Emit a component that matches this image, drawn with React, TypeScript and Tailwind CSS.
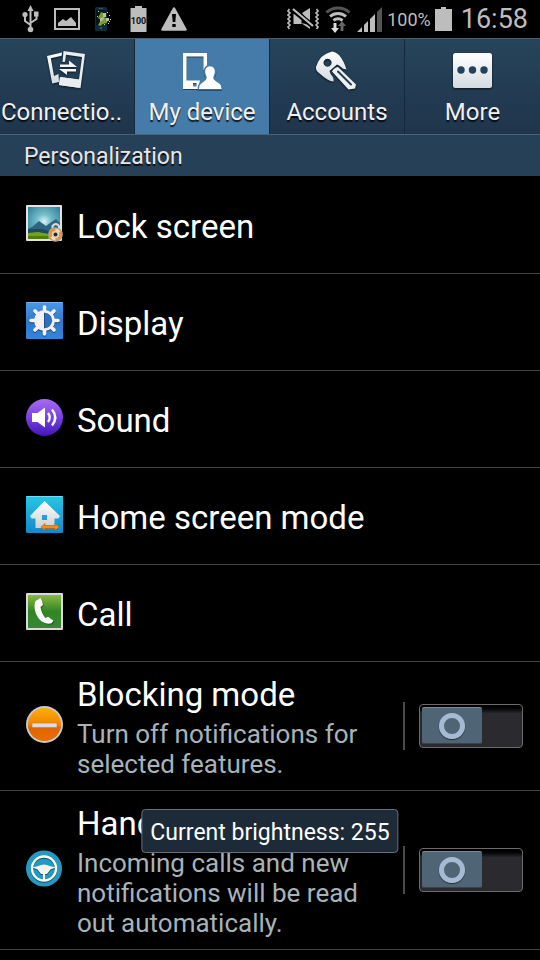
import type { ReactNode } from "react";

function UsbIcon() {
  return (
    <svg width="18" height="28" viewBox="0 0 18 28" fill="none" stroke="#bdbdbd" strokeWidth="2">
      <path d="M8.500 4v20M8.500 20l-5.500-4v-4M8.500 18l6-4v-3" />
      <path d="M8.500 0l3 6h-6z" fill="#bdbdbd" stroke="none" />
      <circle cx="8.500" cy="24.500" r="2.800" fill="#bdbdbd" stroke="none" />
      <circle cx="3" cy="9.500" r="2.600" fill="#bdbdbd" stroke="none" />
      <path d="M12 6.500h4.500v5H12z" fill="#bdbdbd" stroke="none" />
    </svg>
  );
}

function PictureIcon() {
  return (
    <svg width="26" height="22" viewBox="0 0 26 22">
      <path d="M1 1h24v20H1z" fill="none" stroke="#bdbdbd" strokeWidth="2" />
      <path d="M4 18v-3l5-4 3 2 5-4 5 6v3z" fill="#bdbdbd" />
    </svg>
  );
}

function PhoneSparkIcon() {
  return (
    <svg width="18" height="24" viewBox="0 0 18 24">
      <rect width="12" height="24" rx="1.500" fill="#0d2b38" />
      <path d="M1 3h10v15H1z" fill="#06161f" />
      <path d="M4 1h4v1H4zM5 20h2v2H5z" fill="#32566a" />
      <path d="M6 5l5 2-2 3 4 2-1 4-4 1-3 2-2-1 3-5-3-2z" fill="#7d9a35" />
      <path d="M8 6h3v4H8zM11 11h3v3h-3zM5 12l3-2 1 2-4 3z" fill="#b9c39a" />
      <path d="M3 4h1v1H3zM12 5h1v1h-1zM14 8h1v1h-1zM13 16h1v1h-1zM15 12h1v1h-1zM2 9h1v1H2zM9 17h1v1H9zM14 14h1v1h-1z" fill="#d8d86a" />
    </svg>
  );
}

function BatteryLevelIcon() {
  return (
    <svg width="17" height="26" viewBox="0 0 17 26">
      <path d="M5 0h7v2h4.500v24H.5V2H5z" fill="#bdbdbd" />
      <text x="8.500" y="18" textAnchor="middle" className="font-['Roboto',sans-serif] text-[9px] font-bold" fill="#111">100</text>
    </svg>
  );
}

function WarningIcon() {
  return (
    <svg width="26" height="24" viewBox="0 0 26 24">
      <path d="M13 1.500L24.500 22.500H1.500z" fill="#bdbdbd" stroke="#bdbdbd" strokeWidth="2.500" strokeLinejoin="round" />
      <path d="M11 7h4l-.7 8h-2.600zM11.300 17h3.400v3h-3.400z" fill="#000" />
    </svg>
  );
}

function MuteIcon() {
  return (
    <svg width="32" height="22" viewBox="0 0 32 22">
      <path d="M2.500 1l-1.500 2 2 2-2 2 2 2-2 2 2 2-2 2 2 2-2 2 1.500 2M29.500 1l1.500 2-2 2 2 2-2 2 2 2-2 2 2 2-2 2 2 2-1.500 2" fill="none" stroke="#bdbdbd" strokeWidth="1.600" />
      <path d="M6.500 6h4l4 3v7h-8zM15 5l8-5v15z" fill="#bdbdbd" />
      <path d="M14 15l9 2v4z" fill="#bdbdbd" />
      <path d="M5 1l22 18" stroke="#000" strokeWidth="5" />
      <path d="M6 1l20 17" stroke="#bdbdbd" strokeWidth="2.200" />
    </svg>
  );
}

function WifiIcon() {
  return (
    <svg width="26" height="27" viewBox="0 0 26 27" fill="none" stroke="#bdbdbd" strokeWidth="3">
      <path d="M1.500 6.500a17 17 0 0 1 23 0" stroke="#555" />
      <path d="M5 10.500a12 12 0 0 1 16 0M8.500 14.500a7 7 0 0 1 9 0" />
      <path d="M8.500 17h3v5H14l-4 5-4-5h2.500z" fill="#dedede" stroke="none" />
      <path d="M15.500 25v-5H13l4-5 4 5h-2.500v5z" fill="#666" stroke="none" />
    </svg>
  );
}

function SignalIcon() {
  return (
    <svg width="26" height="25" viewBox="0 0 26 25" fill="#bdbdbd">
      <path d="M0 25l5-5v5zM7 25v-7l4-4v11zM13 25V12l5-5v18z" />
      <path d="M20 25V5l5-5v25z" fill="#555" />
    </svg>
  );
}

function ConnectionsIcon() {
  return (
    <svg width="40" height="40" viewBox="0 0 40 40" className="drop-shadow-[0_1px_1px_#0009]">
      <defs>
        <linearGradient id="silver" x1="0" y1="0" x2="0" y2="1">
          <stop offset="0" stopColor="#fff" />
          <stop offset="1" stopColor="#d3dbe2" />
        </linearGradient>
      </defs>
      <path d="M0 6L15 2.500l-.4 3.200L3.800 8.300 7 26l4.500-2 .5 8-6.800 1.500z" fill="url(#silver)" />
      <path fillRule="evenodd" d="M16.500 1L38 4l-4.500 34L12 35l1-8 19 2.500 3-22.600-16-2.200-1 7-2.500.4z" fill="#e9edf0" />
      <path fillRule="evenodd" d="M13 27l20 2.700-1.100 8L12 35zM21 30.800l-.5 3.600 3.500.5.500-3.600z" fill="#e9edf0" />
      <path d="M13 14.500h9V10.500l8 6.500H13zM29 19H12l8 6v-3.500h9z" fill="#f4f6f7" />
    </svg>
  );
}

function DeviceIcon() {
  return (
    <svg width="40" height="40" viewBox="0 0 40 40" className="drop-shadow-[0_1px_0_#0007]">
      <path fillRule="evenodd" d="M1 3h24v15l-3.500 2V6.500h-17v24H18l-2 8.500H1zM11 33v3.500h3.500V33z" fill="#fff" />
      <path d="M28 15.500c4 0 6 3 5.500 7-.3 2.500-1.500 4-1.500 5.500 0 3 8 4 8 9V39H16.500v-2c0-5 7.500-6 7.500-9 0-1.500-1.200-3-1.500-5.500-.5-4 1.500-7 5.500-7z" fill="#fff" stroke="#447ba8" strokeWidth="1.500" />
      <path d="M17 38.500h22.500" stroke="#fff" />
    </svg>
  );
}

function KeyIcon() {
  return (
    <svg width="42" height="40" viewBox="0 0 42 40" className="drop-shadow-[0_1px_1px_#000a]">
      <path fillRule="evenodd" d="M0 17Q2 11 5 7.500 10 3 16.500 1.500q3.500.5 6.500 3.500 5 6 7.500 14.500-4-.5-5.500-2.500-2-2-4-2.500l-7.500 6.500q.5 3 3 5.500 1.500 2 1 5-3-.2-6-2-4-2.500-8.500-6.500Q-.5 20.500 0 17zM11.500 8.800a4 4 0 1 0 .1 0z" fill="url(#silver)" />
      <path d="M16 21.500q2-4 6-4.500L40 34.500l-1 4-6.500 1z" fill="#eef1f3" />
      <path d="M22 21.500l13 13" stroke="#263d50" strokeWidth="2" strokeLinecap="round" />
    </svg>
  );
}

function MoreIcon() {
  return (
    <svg width="40" height="40" viewBox="0 0 40 40" className="drop-shadow-[0_1px_1px_#000a]">
      <rect y="3" width="39" height="35" rx="2.500" fill="url(#silver)" />
      <g fill="#24405a">
        <circle cx="8" cy="20" r="3.700" />
        <circle cx="19.500" cy="20" r="3.700" />
        <circle cx="31" cy="20" r="3.700" />
      </g>
    </svg>
  );
}

function LockScreenIcon() {
  return (
    <svg width="37" height="37" viewBox="0 0 37 37">
      <defs>
        <radialGradient id="sky" cx=".5" cy=".45" r=".65">
          <stop offset="0" stopColor="#d9f4f5" />
          <stop offset=".35" stopColor="#74bcc8" />
          <stop offset="1" stopColor="#2b8298" />
        </radialGradient>
      </defs>
      <rect width="36" height="36" rx="1" fill="#e4e2e2" />
      <path d="M2 2h32v32H2z" fill="url(#sky)" />
      <path d="M2 24l4-2 7-6 7 5 4-3 6-4 4 4v13H2z" fill="#2d6480" />
      <path d="M2 24h14l18 5v5H2z" fill="#1e4b60" />
      <path d="M2 28l10-1 22 4v3H2z" fill="#73a51c" />
      <path d="M2 31h20v3H2z" fill="#4d7f10" />
      <path d="M26.500 24v-3q3.500-4 6.500 0v4" fill="none" stroke="#ddd" strokeWidth="2" />
      <circle cx="29.500" cy="29.500" r="7.300" fill="#a8a19b" />
      <circle cx="29.500" cy="29.500" r="6" fill="#ee9430" />
      <path d="M29.500 23.500a6 6 0 0 1 5 3l-5 3zM29.500 35.500a6 6 0 0 1-5-3l5-3z" fill="#fbd9a0" />
      <circle cx="29.500" cy="29.500" r="3.600" fill="#d8d8d8" />
      <circle cx="29.500" cy="29.500" r="2" fill="#382315" />
    </svg>
  );
}

function DisplayIcon() {
  const angles = [0, 45, 90, 135, 180, 225, 270, 315];
  return (
    <svg width="37" height="37" viewBox="0 0 37 37">
      <defs>
        <linearGradient id="blue" x1="0" y1="0" x2="0" y2="1">
          <stop offset="0" stopColor="#4a98e8" />
          <stop offset=".55" stopColor="#2f78cd" />
          <stop offset="1" stopColor="#3584dc" />
        </linearGradient>
      </defs>
      <rect width="37" height="37" rx="1" fill="url(#blue)" />
      <path d="M.5.5h36" stroke="#72b2f1" />
      <g className="drop-shadow-[0_1px_0_#0007]">
        {angles.map((angle) => (
          <path key={angle} d="M18.500 10V5" stroke="#f5f5f5" strokeWidth="3.600" strokeLinecap="round" transform={`rotate(${angle} 18.500 18.500)`} />
        ))}
        <circle cx="18.500" cy="18.500" r="10.500" fill="#f1f1f1" />
      </g>
      <path d="M18.500 10.800a7.700 7.700 0 0 1 0 15.400z" fill="#2d70c0" />
      <path d="M18.500 10.800v15.400" stroke="#1b518f" />
    </svg>
  );
}

function SoundIcon() {
  return (
    <svg width="37" height="37" viewBox="0 0 37 37">
      <defs>
        <linearGradient id="purple" x1="0" y1="0" x2="0" y2="1">
          <stop offset="0" stopColor="#a86cf0" />
          <stop offset=".5" stopColor="#7a42e0" />
          <stop offset="1" stopColor="#4216b8" />
        </linearGradient>
      </defs>
      <circle cx="18.500" cy="18.500" r="18.500" fill="url(#purple)" />
      <path d="M6 14h5.500L19 8.500v20L11.500 23H6z" fill="#fff" />
      <path d="M22 14q3.500 4.500 0 9M26 10.500q6.500 8 0 16" fill="none" stroke="#fff" strokeWidth="2.400" />
    </svg>
  );
}

function HomeModeIcon() {
  return (
    <svg width="37" height="37" viewBox="0 0 37 37">
      <defs>
        <linearGradient id="cyan" x1="0" y1="0" x2="0" y2="1">
          <stop offset="0" stopColor="#25c8e6" />
          <stop offset="1" stopColor="#1587cc" />
        </linearGradient>
        <linearGradient id="house" x1="0" y1="0" x2="0" y2="1">
          <stop offset="0" stopColor="#fff" />
          <stop offset="1" stopColor="#ccd0d2" />
        </linearGradient>
      </defs>
      <rect width="37" height="37" rx="1" fill="url(#cyan)" />
      <path d="M.5.5h36" stroke="#70def0" />
      <path fillRule="evenodd" d="M18.500 5L34 20l-1.500 2.500h-4V32h-19v-9.500h-4L4 20zM16 19v5h5v-5z" fill="url(#house)" />
      <path d="M15 31l4-3.500v2h10v-2l4.500 3.500-4.500 3.500v-2H19v2z" fill="#f78b14" stroke="#a85e16" strokeWidth=".6" />
    </svg>
  );
}

function CallIcon() {
  return (
    <svg width="37" height="37" viewBox="0 0 37 37">
      <defs>
        <linearGradient id="green" x1="0" y1="0" x2="0" y2="1">
          <stop offset="0" stopColor="#8bb843" />
          <stop offset=".5" stopColor="#328522" />
          <stop offset="1" stopColor="#348838" />
        </linearGradient>
      </defs>
      <rect width="37" height="37" rx="1" fill="#d9dbd8" />
      <path d="M2 2h33v33H2z" fill="url(#green)" />
      <path d="M9.500 8l5-3q2 2.500 2.500 7l-2.500 2q1 6.500 5 11l2.500-1.300 5.500 4-2 2.500q-5.500 1.500-10-2C9.500 23.500 7 14 9.500 8z" fill="#fafafa" className="drop-shadow-[1px_1px_0_#0005]" />
    </svg>
  );
}

function BlockingIcon() {
  return (
    <svg width="37" height="37" viewBox="0 0 37 37">
      <defs>
        <linearGradient id="orange" x1="0" y1="0" x2="0" y2="1">
          <stop offset="0" stopColor="#ffae08" />
          <stop offset=".5" stopColor="#f18500" />
          <stop offset=".6" stopColor="#df6500" />
          <stop offset="1" stopColor="#ea6d00" />
        </linearGradient>
      </defs>
      <circle cx="18.500" cy="18.500" r="18.500" fill="#c9c9cc" />
      <circle cx="18.500" cy="18.500" r="16.600" fill="url(#orange)" />
      <path d="M6 17h25v4.500H6z" fill="#dcdbe0" stroke="#c9782e" strokeWidth=".6" />
    </svg>
  );
}

function WheelIcon() {
  return (
    <svg width="37" height="37" viewBox="0 0 37 37">
      <circle cx="18" cy="18.500" r="18" fill="#2499c2" />
      <g className="drop-shadow-[0_1px_0_#0a4f6b]">
        <circle cx="18" cy="18.500" r="12" fill="none" stroke="#fff" strokeWidth="2.400" />
        <path d="M6.500 17.500l6-1.500q5.500-3 11 0l6 1.500-5 2-3.500 4.500h-6l-3.500-4.500z" fill="#f3f3f3" />
        <path d="M18 23v7.500" stroke="#fff" strokeWidth="2.200" />
      </g>
    </svg>
  );
}

const tabs: { label: string; icon: ReactNode; selected?: boolean; clipped?: boolean }[] = [
  { label: "Connectio..", icon: <ConnectionsIcon />, clipped: true },
  { label: "My device", icon: <DeviceIcon />, selected: true },
  { label: "Accounts", icon: <KeyIcon /> },
  { label: "More", icon: <MoreIcon /> },
];

const items: { label: string; icon: ReactNode }[] = [
  { label: "Lock screen", icon: <LockScreenIcon /> },
  { label: "Display", icon: <DisplayIcon /> },
  { label: "Sound", icon: <SoundIcon /> },
  { label: "Home screen mode", icon: <HomeModeIcon /> },
  { label: "Call", icon: <CallIcon /> },
];

const switches: { id: string; label: string; detail: string; icon: ReactNode }[] = [
  { id: "blocking", label: "Blocking mode", detail: "Turn off notifications for selected features.", icon: <BlockingIcon /> },
  { id: "handsfree", label: "Hands-free mode", detail: "Incoming calls and new notifications will be read out automatically.", icon: <WheelIcon /> },
];

function StatusBar() {
  return (
    <header className="flex h-[38px] items-center justify-between bg-black pl-[22px] pr-3 text-[#bdbdbd]">
      <div className="flex items-center gap-[14px]">
        <UsbIcon />
        <PictureIcon />
        <div className="flex items-center gap-[17px] pl-px">
          <PhoneSparkIcon />
          <BatteryLevelIcon />
        </div>
        <WarningIcon />
      </div>
      <div className="flex items-center gap-1">
        <div className="flex items-center gap-[6px]">
          <MuteIcon />
          <WifiIcon />
          <SignalIcon />
        </div>
        <span className="text-[18px]">100%</span>
        <svg width="17" height="24" viewBox="0 0 17 24">
          <path d="M6 0h5v2h6v22H0V2h6z" fill="#bdbdbd" />
        </svg>
        <time className="pl-[5px] text-[27px]">16:58</time>
      </div>
    </header>
  );
}

function Switch({ id }: { id: string }) {
  return (
    <span className="relative block h-11 w-[104px] shrink-0">
      <input id={id} type="checkbox" role="switch" className="peer absolute inset-0 z-10 h-full w-full cursor-pointer opacity-0" />
      <span className="flex h-full items-center rounded-[4px] border border-[#6b6b6e] bg-linear-to-b from-black to-[#2a2a2f] to-20% p-[2px] peer-checked:justify-end">
        <span className="flex h-[37px] w-[60px] items-center justify-center rounded-[2px] border-t border-b border-t-[#768999] border-b-[#34444f] bg-[#4f6474]">
          <span className="h-[26px] w-[26px] rounded-full border-5 border-[#a5bbd4] shadow-[0_1px_1px_#0008]" />
        </span>
      </span>
    </span>
  );
}

export default function App() {
  return (
    <div className="relative min-h-screen bg-black font-['Roboto',sans-serif] text-white">
      <StatusBar />
      <nav role="tablist" className="grid grid-cols-4 border-t border-[#46606f] bg-linear-to-b from-[#27445b] to-[#1f354c]">
        {tabs.map((tab) => (
          <button
            key={tab.label}
            role="tab"
            aria-selected={Boolean(tab.selected)}
            className={`flex h-[95px] flex-col items-center border-r border-[#16293a] pt-[11px] text-[24px] leading-[30px] text-[#f0f0f0] last:border-r-0 ${tab.selected ? "bg-[#447ba8]" : ""}`}
          >
            {tab.icon}
            <span className={`mt-[7px] text-shadow-[0_2px_1px_#000c] ${tab.clipped ? "w-full pl-px text-left" : ""}`}>{tab.label}</span>
          </button>
        ))}
      </nav>
      <h2 className="border-y border-t-[#4c6575] border-b-black bg-[#264057] px-6 pt-[7px] pb-1 text-[23px] leading-[30px] text-[#e6e6e6] text-shadow-[0_2px_1px_#000c]">Personalization</h2>
      <ul>
        {items.map((item) => (
          <li key={item.label} className="border-b border-[#414141]">
            <button className="flex h-24 w-full items-center gap-[14px] pl-[26px] text-left text-[33px]">
              <span className="shrink-0 pb-[3px]">{item.icon}</span>
              <span className="pt-1">{item.label}</span>
            </button>
          </li>
        ))}
        {switches.map((item) => (
          <li key={item.id} className="flex items-center border-b border-[#414141] pt-[10px] pb-[11px] pl-[26px] pr-[17px]">
            <span className="shrink-0 pb-[3px]">{item.icon}</span>
            <label htmlFor={item.id} className="flex-1 pl-[14px] pr-4">
              <span className="block text-[33px] leading-[46px]">{item.label}</span>
              <span className="mt-px block text-[26px] leading-[30px] text-[#a7b3b9]">{item.detail}</span>
            </label>
            <span className="mr-[14px] h-12 w-[2px] bg-[#4a4a4a]" />
            <Switch id={item.id} />
          </li>
        ))}
      </ul>
      <div role="status" className="absolute bottom-[107px] left-1/2 -translate-x-1/2 whitespace-nowrap rounded-[4px] border border-[#65707a] bg-[#1d2b39] px-2 pt-2 pb-1 text-[23px] leading-[30px]">
        Current brightness: 255
      </div>
    </div>
  );
}
